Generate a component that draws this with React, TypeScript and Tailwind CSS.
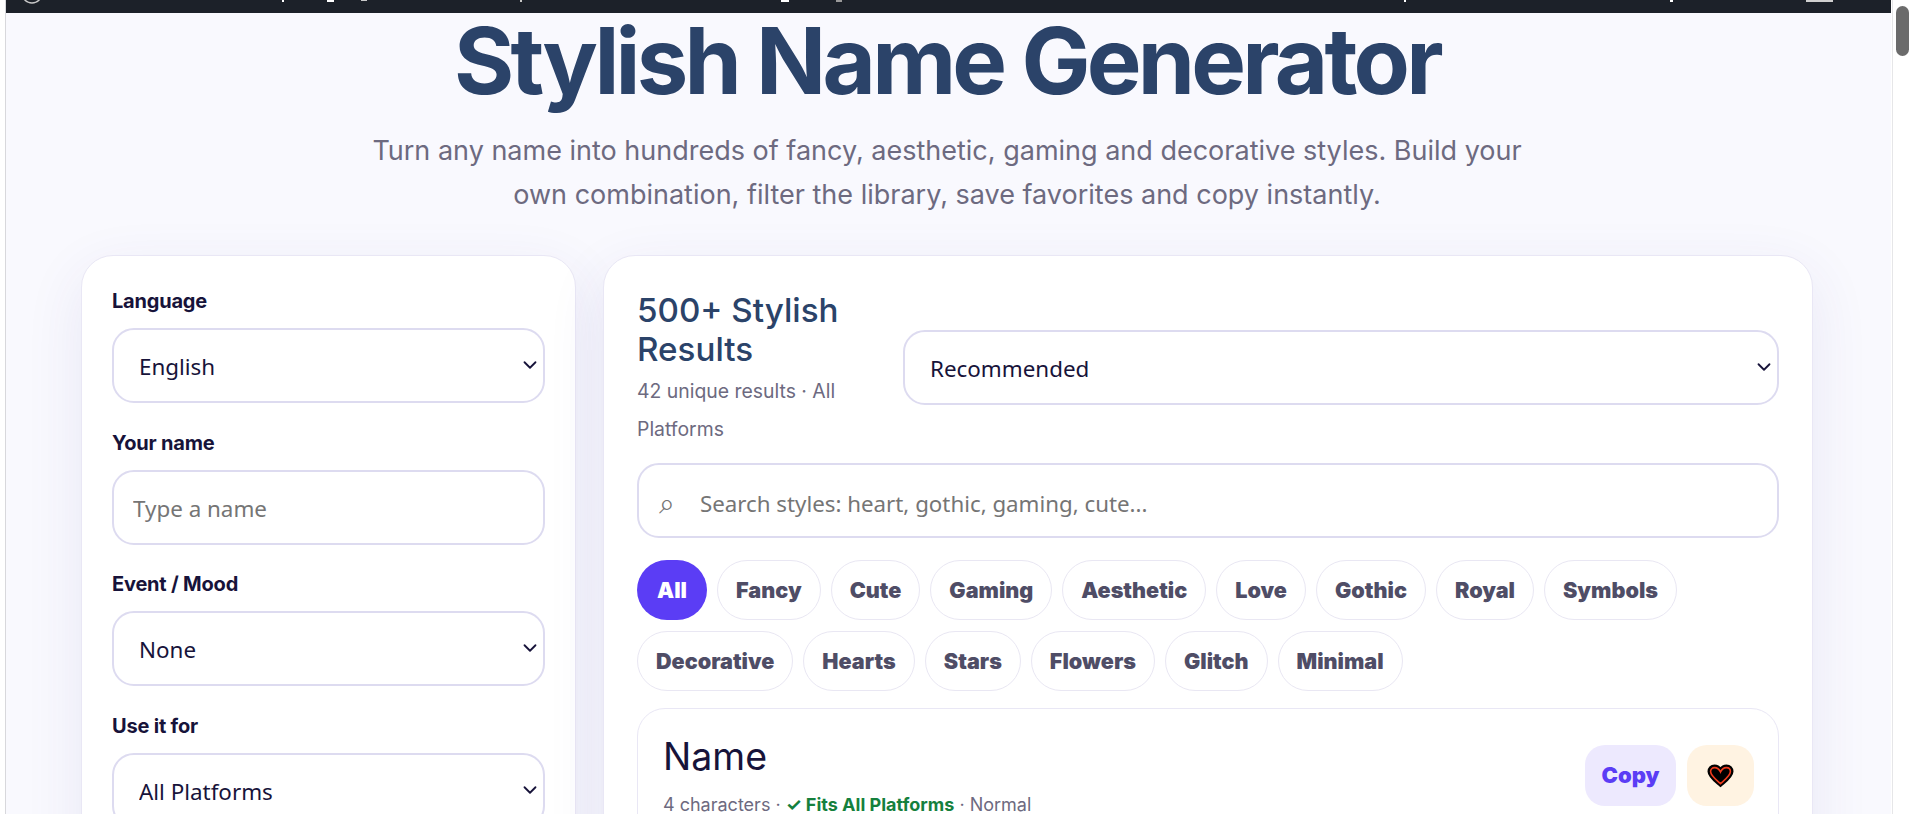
import { ChevronDown } from 'lucide-react';

const filters = [
  ['All', 'Fancy', 'Cute', 'Gaming', 'Aesthetic', 'Love', 'Gothic', 'Royal', 'Symbols'],
  ['Decorative', 'Hearts', 'Stars', 'Flowers', 'Glitch', 'Minimal'],
];

// bits of the page above that poke into the clipped top bar
const barMarks = [
  'left-[276px] w-[2px] h-[2px] bg-white',
  'left-[321px] w-[7px] h-[2px] bg-white',
  'left-[355px] w-[6px] h-[1px] bg-[#c8c8c8]',
  'left-[514px] w-[2px] h-[2px] bg-[#c8c8c8]',
  'left-[775px] w-[8px] h-[2px] bg-white',
  'left-[830px] w-[6px] h-[2px] bg-[#9a9a9a]',
  'left-[1398px] w-[2px] h-[2px] bg-white',
  'left-[1664px] w-[3px] h-[2px] bg-white',
  'left-[1800px] w-[27px] h-[2px] bg-[#d0d0d0]',
];

function Field({ label, children }: { label: string; children: React.ReactNode }) {
  return (
    <div className="flex flex-col">
      <label className="mb-[14px] text-[20px] leading-[26px] font-bold tracking-[-0.2px] text-[#17133a]">{label}</label>
      {children}
    </div>
  );
}

function Select({ value, className }: { value: string; className: string }) {
  return (
    <div className={`relative ${className}`}>
      <select
        defaultValue={value}
        className="h-[75px] w-full appearance-none rounded-[22px] border-2 border-[#dddbf0] bg-white pt-[3px] pr-[30px] pl-[25px] font-['Noto_Sans',sans-serif] text-[22.4px] text-[#17133a]"
      >
        <option>{value}</option>
      </select>
      <ChevronDown size={22} strokeWidth={2} className="pointer-events-none absolute top-[26px] right-[4px] text-[#17133a]" />
    </div>
  );
}

function Heart() {
  return (
    <svg width="27" height="24" viewBox="0 0 27 24">
      <path
        d="M13.5 22 C9 18 1.5 13 1.5 7.5 C1.5 4 4 1.5 7.5 1.5 C10 1.5 12.3 2.8 13.5 5 C14.7 2.8 17 1.5 19.5 1.5 C23 1.5 25.5 4 25.5 7.5 C25.5 13 18 18 13.5 22 Z"
        fill="#000"
        stroke="#000"
        strokeWidth="2"
      />
      <path
        d="M13.5 19.6 C9.5 16 3.6 12 3.6 7.6 C3.6 5.2 5.3 3.6 7.6 3.6 C10 3.6 12.2 5.2 13.5 8 C14.8 5.2 17 3.6 19.4 3.6 C21.7 3.6 23.4 5.2 23.4 7.6 C23.4 12 17.5 16 13.5 19.6 Z"
        fill="#000"
        stroke="#ef3b1d"
        strokeWidth="1.6"
      />
    </svg>
  );
}

export default function App() {
  return (
    <div className="flex h-[814px] overflow-hidden bg-white font-['Inter',sans-serif]">
      <div className="ml-[5px] flex w-[1886px] flex-col border-l border-[#d8d8dc] bg-[#f9f9fe]">
        <div className="relative h-[13px] shrink-0 overflow-hidden bg-[#1c2129]">
          <svg width="26" height="13" viewBox="0 0 26 13" className="absolute top-0 left-[13px]">
            <circle cx="13" cy="-7" r="10" fill="none" stroke="#c8c8c8" strokeWidth="1.5" />
          </svg>
          {barMarks.map((mark) => (
            <span key={mark} className={`absolute top-0 ${mark}`} />
          ))}
        </div>

        <div className="flex flex-col pr-[78px] pl-[75px]">
          <h1 className="mt-[-7px] text-center text-[92px] leading-[110px] font-bold tracking-[-3.75px] text-[#2b4369]">
            Stylish Name Generator
          </h1>
          <p className="mx-auto mt-[13px] w-[1200px] text-center text-[27px] leading-[44px] text-[#6d6a80]">
            Turn any name into hundreds of fancy, aesthetic, gaming and decorative styles. Build your own combination,
            filter the library, save favorites and copy instantly.
          </p>

          <div className="mt-[38px] flex items-start gap-[27px]">
            <aside className="flex h-[700px] w-[495px] shrink-0 flex-col gap-[26.5px] rounded-[32px] border border-[#e9e7f5] bg-white px-[30px] pt-[32px] shadow-[0_18px_60px_rgba(70,60,160,0.09)]">
              <Field label="Language">
                <Select value="English" className="w-full" />
              </Field>
              <Field label="Your name">
                <input
                  placeholder="Type a name"
                  className="h-[75px] rounded-[22px] border-2 border-[#dddbf0] bg-white px-[19px] pt-[3px] font-['Noto_Sans',sans-serif] text-[22.4px] outline-none placeholder:text-[#757575]"
                />
              </Field>
              <Field label="Event / Mood">
                <Select value="None" className="w-full" />
              </Field>
              <Field label="Use it for">
                <Select value="All Platforms" className="w-full" />
              </Field>
            </aside>

            <main className="flex h-[700px] w-[1210px] shrink-0 flex-col rounded-[32px] border border-[#e9e7f5] bg-white pt-[35px] pr-[33px] pl-[33px] shadow-[0_18px_60px_rgba(70,60,160,0.09)]">
              <div className="flex items-start gap-[22px]">
                <div className="w-[244px] shrink-0">
                  <h2 className="text-[33.2px] leading-[39px] font-medium text-[#2b4369]">500+ Stylish Results</h2>
                  <p className="mt-[3px] text-[19.4px] leading-[38px] text-[#6d6a80]">42 unique results · All Platforms</p>
                </div>
                <Select value="Recommended" className="mt-[39px] min-w-0 flex-1" />
              </div>

              <div className="mt-[15px] flex h-[75px] items-center rounded-[22px] border-2 border-[#dddbf0] pl-[20px]">
                <span className="mt-[4px] w-[41px] text-[28px] leading-none text-[#757575]">⌕</span>
                <input
                  placeholder="Search styles: heart, gothic, gaming, cute..."
                  className="min-w-0 flex-1 pt-[6px] font-['Noto_Sans',sans-serif] text-[22.3px] outline-none placeholder:text-[#757575]"
                />
              </div>

              <div className="mt-[22px] flex flex-col gap-[11px]">
                {filters.map((row) => (
                  <div key={row[0]} className="flex gap-[10px]">
                    {row.map((name) => (
                      <button
                        key={name}
                        className={
                          name === 'All'
                            ? 'h-[60px] rounded-full bg-[#5b3df5] px-[20px] text-[21.6px] font-black text-white'
                            : 'h-[60px] rounded-full border border-[#e9e7f3] bg-white px-[18px] text-[21.6px] font-black text-[#4f4d66]'
                        }
                      >
                        {name}
                      </button>
                    ))}
                  </div>
                ))}
              </div>

              <div className="mt-[17px] flex h-[200px] justify-between rounded-[28px] border border-[#e9e7f5] pt-[25px] pr-[24px] pl-[25px]">
                <div>
                  <div className="text-[37.5px] leading-[46px] text-[#17133a]">Name</div>
                  <div className="mt-[15px] text-[18px] leading-[20px] text-[#6d6a80]">
                    4 characters · <span className="font-bold text-[#15803d]">✓ Fits All Platforms</span> · Normal
                  </div>
                </div>
                <div className="mt-[11px] flex gap-[11px]">
                  <button className="h-[61px] w-[91px] rounded-[20px] bg-[#ede9fe] text-[22px] font-black text-[#5b3df5]">
                    Copy
                  </button>
                  <button className="flex h-[61px] w-[67px] items-center justify-center rounded-[20px] bg-[#fff3e2]">
                    <Heart />
                  </button>
                </div>
              </div>
            </main>
          </div>
        </div>
      </div>

      <div className="ml-[1px] flex-1 border-l border-[#e6e6e8] bg-white pt-[6px] pl-[3px]">
        <div className="h-[50px] w-[13px] rounded-full bg-[#6b6b6b]" />
      </div>
    </div>
  );
}
